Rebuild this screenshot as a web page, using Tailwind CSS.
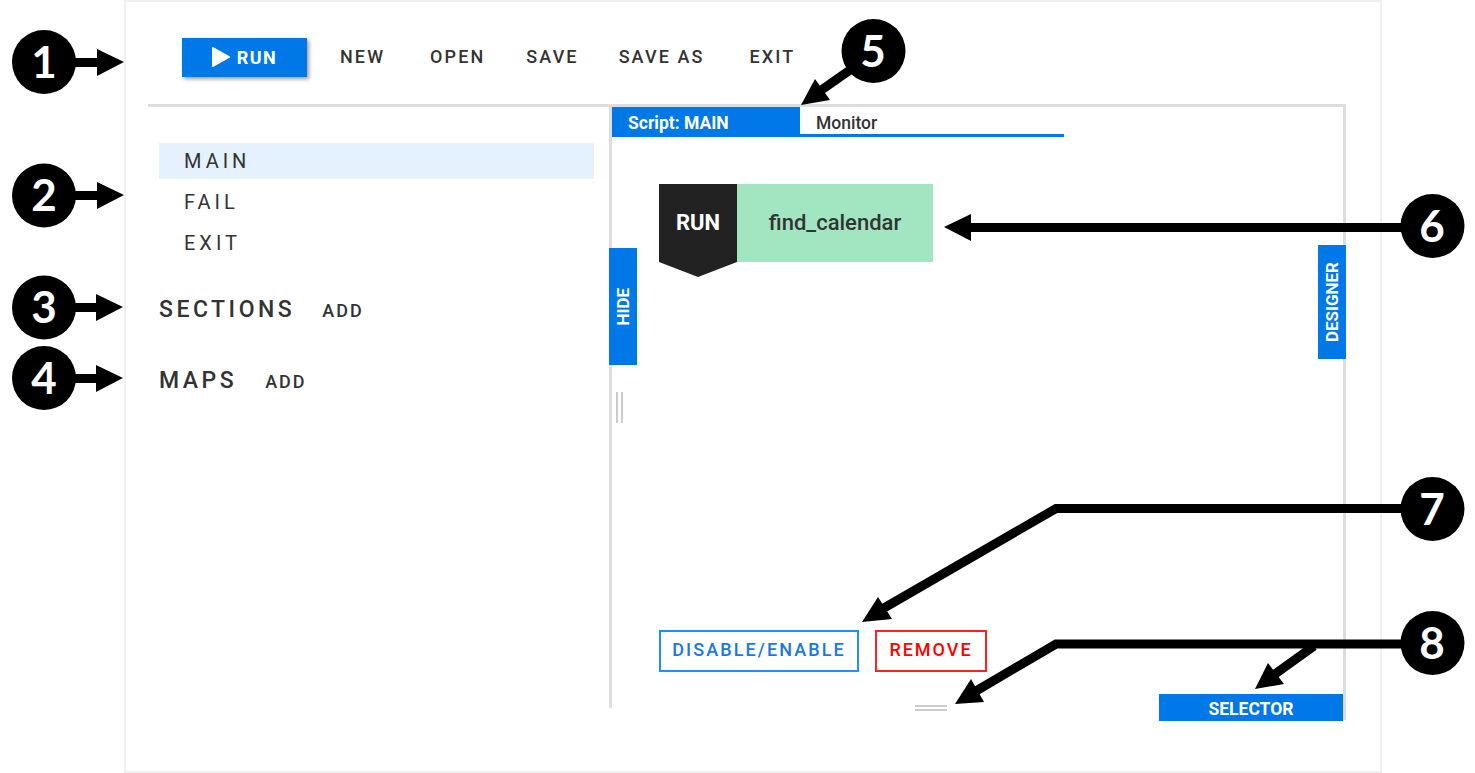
<!DOCTYPE html>
<html lang="en">
<head>
    <meta charset="UTF-8">
    <title>Script Editor</title>
    <script src="https://cdn.jsdelivr.net/npm/@tailwindcss/browser@4"></script>
</head>
<body class="bg-white h-[773px] w-[1475px] overflow-hidden relative font-['Roboto',sans-serif] text-[#333]">
    <!-- App panel -->
    <div class="ml-[124px] w-[1258px] h-[773px] border-2 border-[#f0f0f0] pl-[22px] pr-[34px] flex flex-col">
        <!-- Toolbar -->
        <div class="h-[102px] border-b-[3px] border-[#ddd] shrink-0 box-content flex items-start">
            <div class="flex items-center pt-[36px] pl-[34px] text-[18px] font-medium tracking-[2.1px]">
                <button class="w-[125px] h-[39px] bg-[#0078e7] text-white font-bold tracking-[1.5px] pb-[1px] flex items-center justify-center gap-[7px] shadow-[2px_2px_4px_rgba(0,0,0,0.4)]">
                    <svg width="18" height="20" viewBox="0 0 18 20"><path d="M1 1 L17 10 L1 19 Z" fill="#fff" stroke="#fff" stroke-width="2" stroke-linejoin="round"/></svg>
                    RUN
                </button>
                <span class="ml-[33px] pb-[2px]">NEW</span>
                <span class="ml-[45px] pb-[2px]">OPEN</span>
                <span class="ml-[41px] pb-[2px]">SAVE</span>
                <span class="ml-[40px] pb-[2px]">SAVE AS</span>
                <span class="ml-[45px] pb-[2px]">EXIT</span>
            </div>
        </div>
        <div class="flex h-[601px]">
            <!-- Left column -->
            <div class="w-[461px] shrink-0 pl-[11px] pt-[36px]">
                <div class="w-[435px] h-[36px] bg-[#e5f2fe] pl-[25px] flex items-center text-[20px] tracking-[4px]">MAIN</div>
                <div class="h-[41px] mt-[2px] pl-[25px] flex items-center text-[20px] tracking-[4px]">FAIL</div>
                <div class="h-[41px] pl-[25px] flex items-center text-[20px] tracking-[4px]">EXIT</div>
                <div class="flex items-center mt-[33px] h-[28px]">
                    <span class="text-[23px] font-medium tracking-[3.5px]">SECTIONS</span>
                    <span class="ml-[27px] text-[18px] font-medium tracking-[2px]">ADD</span>
                </div>
                <div class="flex items-center mt-[43px] h-[28px]">
                    <span class="text-[23px] font-medium tracking-[3.5px]">MAPS</span>
                    <span class="ml-[28px] text-[18px] font-medium tracking-[2px]">ADD</span>
                </div>
            </div>
            <!-- Right column -->
            <div class="flex-1 border-l-[3px] border-[#ddd] relative">
                <div class="w-[452px] h-[30px] border-b-[3px] border-[#0078e7] flex">
                    <div class="w-[188px] h-[30px] bg-[#0078e7] text-white text-[17.500px] font-bold pl-[16px] pt-[2px] flex items-center">Script: MAIN</div>
                    <div class="pl-[16px] h-[30px] pt-[2px] flex items-center text-[17.500px] font-medium">Monitor</div>
                </div>
                <div class="flex ml-[47px] mt-[47px]">
                    <div class="w-[78px] h-[93px] bg-[#222] text-white text-[22px] font-bold flex items-start justify-center pt-[22px] [clip-path:polygon(0_0,100%_0,100%_84%,50%_100%,0_84%)]">RUN</div>
                    <div class="w-[196px] h-[78px] bg-[#a1e6c0] text-[22px] font-medium pb-[2px] flex items-center justify-center">find_calendar</div>
                </div>
                <div class="flex ml-[47px] mt-[353px] gap-[16px]">
                    <button class="w-[200px] h-[42px] border-2 border-[#1e8fff] text-[#1a78e0] text-[18px] font-medium tracking-[2.1px] pb-[3px]">DISABLE/ENABLE</button>
                    <button class="w-[112px] h-[42px] border-2 border-[#ff2020] text-[#ff0000] text-[18px] font-medium tracking-[2px] pb-[3px]">REMOVE</button>
                </div>

                <!-- Edge tabs and drag handles -->
                <div class="absolute left-[731px] top-0 w-[3px] h-[613px] bg-[#ddd]"></div>
                <div class="absolute left-[-3px] top-[141px] w-[28px] h-[117px] bg-[#0078e7] text-white text-[17px] font-bold pl-[2px] flex items-center justify-center"><span class="[writing-mode:vertical-rl] rotate-180">HIDE</span></div>
                <div class="absolute left-[706px] top-[138px] w-[28px] h-[114px] bg-[#0078e7] text-white text-[17px] font-bold pl-[2px] flex items-center justify-center"><span class="[writing-mode:vertical-rl] rotate-180">DESIGNER</span></div>
                <div class="absolute left-[4px] top-[285px] w-[7px] h-[31px] border-x-2 border-[#ccc]"></div>
                <div class="absolute left-[303px] top-[598px] w-[32px] h-[6px] border-y-2 border-[#ccc]"></div>
                <div class="absolute left-[547px] top-[587px] w-[184px] h-[27px] bg-[#0078e7] text-white text-[17.500px] font-bold pt-[3px] flex items-center justify-center">SELECTOR</div>
            </div>
        </div>
    </div>

    <!-- Callout arrows over the screenshot -->
    <svg class="absolute left-0 top-0" width="1475" height="773" viewBox="0 0 1475 773">
        <g fill="#000">
            <path d="M70 58 H97 V49 L124 62 L97 76 V67 H70 Z"/>
            <path d="M70 191 H97 V182 L124 195 L97 209 V200 H70 Z"/>
            <path d="M70 303 H96 V294 L123 307 L96 321 V312 H70 Z"/>
            <path d="M70 374 H96 V365 L123 378 L96 392 V383 H70 Z"/>
            <path d="M801 105 L815 79 L830 100 Z"/>
            <path d="M944 227 L971 214 V241 Z"/>
            <path d="M862 622 L878 597 L892 619 Z"/>
            <path d="M955 704 L971 679 L984 702 Z"/>
            <path d="M1255 689 L1268 663 L1284 684 Z"/>
        </g>
        <g fill="none" stroke="#000" stroke-width="9">
            <path d="M850 70 L820 91"/>
            <path d="M965 227.500 H1410"/>
            <path d="M1410 508.500 H1056 L884 608"/>
            <path d="M1410 644 H1056 L976 691"/>
            <path d="M1314 646 L1275 674"/>
        </g>
        <g fill="#000">
            <circle cx="44" cy="62" r="32"/>
            <circle cx="44" cy="195.500" r="32"/>
            <circle cx="44" cy="307.500" r="32"/>
            <circle cx="44" cy="378" r="32"/>
            <circle cx="873.500" cy="51" r="32"/>
            <circle cx="1432.500" cy="226" r="32"/>
            <circle cx="1432.500" cy="509" r="32"/>
            <circle cx="1432.500" cy="643" r="32"/>
        </g>
        <g fill="#fff" font-family="Lato, sans-serif" font-weight="700" font-size="44" text-anchor="middle">
            <text x="44" y="78">1</text>
            <text x="44" y="211">2</text>
            <text x="44" y="323">3</text>
            <text x="44" y="394">4</text>
            <text x="873" y="67">5</text>
            <text x="1432" y="242">6</text>
            <text x="1432" y="525">7</text>
            <text x="1432" y="659">8</text>
        </g>
    </svg>
</body>
</html>
